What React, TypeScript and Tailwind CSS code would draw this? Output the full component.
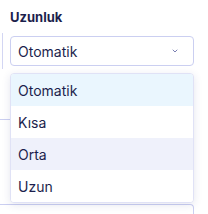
import { ChevronDown } from "lucide-react";

const options = [
  { label: "Otomatik", bg: "bg-[#eaf6fe]" },
  { label: "Kısa", bg: "bg-white" },
  { label: "Orta", bg: "bg-[#eff1fb]" },
  { label: "Uzun", bg: "bg-white" },
];

export default function App() {
  return (
    <div className="relative w-[208px] h-[214px] overflow-hidden bg-white font-['Inter',sans-serif] text-[#1c1f4d]">
      <div className="pt-[9px]">
        <div className="pl-[10px] text-[13px] leading-[16px] font-bold">Uzunluk</div>
        <div className="mt-[11px] flex">
          <div className="w-[3px] -my-[3px] border-r border-[#d3d6f3]" />
          <div className="ml-[7px] w-[184px] h-[30px] flex items-center justify-between rounded-[4px] border border-[#cbcff1] pl-[7px] pr-[14px]">
            <span className="text-[14px]">Otomatik</span>
            <ChevronDown className="w-[8px] h-[8px] text-[#7b80b3]" strokeWidth={3} />
          </div>
        </div>
        <div className="mt-[53px] h-px w-[10px] bg-[#cbcff1]" />
        <div className="mt-[84px] w-[194px] h-[30px] border-t border-r border-[#cbcff1] rounded-tr-[4px]" />
      </div>

      <div className="absolute top-[73px] left-[10px] w-[184px] rounded-[4px] border border-[#e0e2f6] bg-white shadow-[0_2px_8px_rgba(40,50,120,0.12)] overflow-hidden">
        {options.map((o) => (
          <div key={o.label} className={`h-[32px] flex items-center pl-[7px] text-[14px] ${o.bg}`}>
            {o.label}
          </div>
        ))}
      </div>
    </div>
  );
}
